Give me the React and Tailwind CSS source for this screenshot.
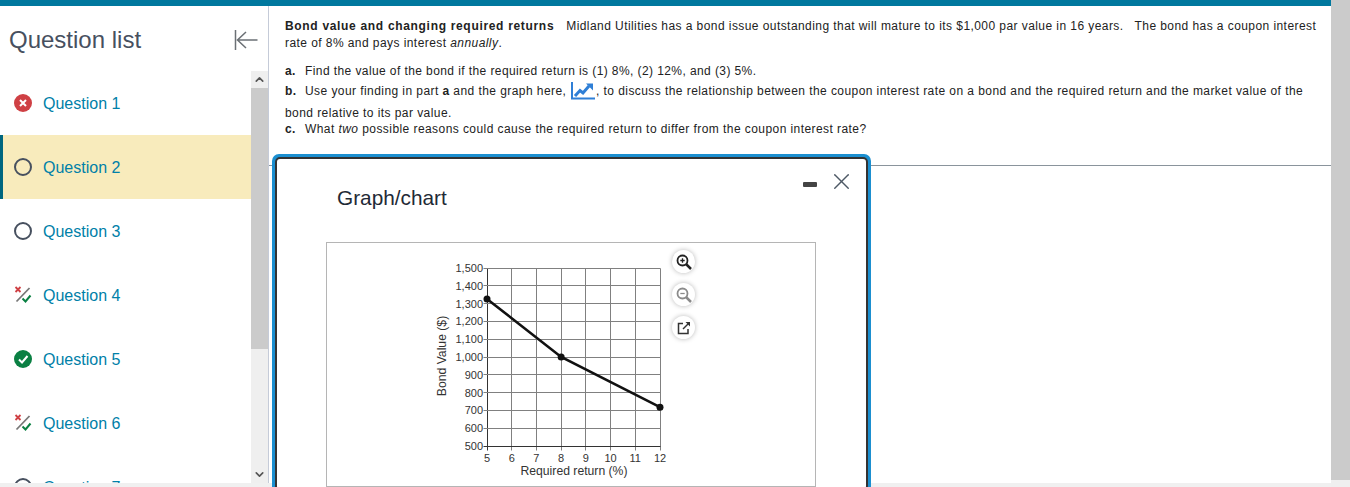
import React from "react";
import { X, ChevronUp, ChevronDown } from "lucide-react";

const questions = [
  { name: "Question 1", status: "wrong" },
  { name: "Question 2", status: "open", active: true },
  { name: "Question 3", status: "open" },
  { name: "Question 4", status: "partial" },
  { name: "Question 5", status: "right" },
  { name: "Question 6", status: "partial" },
  { name: "Question 7", status: "open" },
];

function StatusIcon({ status }) {
  if (status === "wrong") {
    return (
      <svg width="18" height="18" viewBox="0 0 18 18">
        <circle cx="9" cy="9" r="9" fill="#cf4044" />
        <path d="M6 6l6 6M12 6l-6 6" stroke="#fff" strokeWidth="2" />
      </svg>
    );
  }
  if (status === "right") {
    return (
      <svg width="18" height="18" viewBox="0 0 18 18">
        <circle cx="9" cy="9" r="9" fill="#0a8043" />
        <path d="M5 9.500l3 3 5.500-6.500" stroke="#fff" strokeWidth="2" fill="none" />
      </svg>
    );
  }
  if (status === "partial") {
    return (
      <svg width="18" height="18" viewBox="0 0 18 18">
        <path d="M1.500 1l5 5M6.500 1l-5 5" stroke="#cf4044" strokeWidth="1.8" />
        <path d="M2.500 15.500L15.500 2" stroke="#777" strokeWidth="1.8" />
        <path d="M8.500 12.500l3 3 5-6" stroke="#0a8043" strokeWidth="2" fill="none" />
      </svg>
    );
  }
  return (
    <svg width="18" height="18" viewBox="0 0 18 18">
      <circle cx="9" cy="9" r="8" fill="none" stroke="#47505f" strokeWidth="2" />
    </svg>
  );
}

function QuestionRow({ q }) {
  return (
    <div className={`flex h-16 shrink-0 items-center ${q.active ? "border-l-[3px] border-[#00667f] bg-[#f8ebbc] pl-[11px]" : "pl-[14px]"}`}>
      <StatusIcon status={q.status} />
      <span className="ml-[11px] pt-[2px] text-[16px] text-[#0080a8]">{q.name}</span>
    </div>
  );
}

function GraphIcon() {
  return (
    <svg width="24" height="18" viewBox="0 0 24 18" className="mx-[1px] inline-block align-[-5px]">
      <path d="M1 0v16.500h23" stroke="#2f7fd6" strokeWidth="2" fill="none" />
      <path d="M4 14l5-5.500 3 2.500 6-7" stroke="#2f7fd6" strokeWidth="3" fill="none" />
      <path d="M15 1.500h7v7z" fill="#2f7fd6" />
    </svg>
  );
}

function Chart() {
  const xs = [5, 6, 7, 8, 9, 10, 11, 12];
  const ys = [1500, 1400, 1300, 1200, 1100, 1000, 900, 800, 700, 600, 500];
  const xAt = (v) => 160 + ((v - 5) * 173) / 7;
  const yAt = (v) => 25 + ((1500 - v) * 178) / 1000;
  const crisp = (n) => Math.floor(n) + 0.5;
  return (
    <svg width="488" height="243" viewBox="0 0 488 243" className="block font-['Liberation_Sans',Arial,sans-serif]">
      {xs.map((v) => (
        <line key={v} x1={crisp(xAt(v))} x2={crisp(xAt(v))} y1={crisp(yAt(1500))} y2={crisp(yAt(500)) + 4} stroke={v === 5 ? "#333" : "#808080"} />
      ))}
      {ys.map((v) => (
        <line key={v} x1={crisp(xAt(5)) - 4} x2={crisp(xAt(12))} y1={crisp(yAt(v))} y2={crisp(yAt(v))} stroke={v === 500 ? "#333" : "#808080"} />
      ))}
      {xs.map((v) => (
        <text key={v} x={xAt(v)} y="219" textAnchor="middle" fontSize="11" fill="#333">{v}</text>
      ))}
      {ys.map((v) => (
        <text key={v} x={xAt(5) - 4} y={yAt(v) + 4} textAnchor="end" fontSize="11" fill="#333">
          {v >= 1000 ? `1,${String(v - 1000).padStart(3, "0")}` : v}
        </text>
      ))}
      <text x="247" y="232" textAnchor="middle" fontSize="12.2" fill="#333">Required return (%)</text>
      <text transform="translate(119 113) rotate(-90)" textAnchor="middle" fontSize="12.2" fill="#333">Bond Value ($)</text>
      <polyline points={`${xAt(5)},${yAt(1326)} ${xAt(8)},${yAt(1000)} ${xAt(12)},${yAt(718)}`} fill="none" stroke="#111" strokeWidth="2.6" />
      <circle cx={xAt(5)} cy={yAt(1326)} r="3.5" fill="#111" />
      <circle cx={xAt(8)} cy={yAt(1000)} r="3.5" fill="#111" />
      <circle cx={xAt(12)} cy={yAt(718)} r="3.5" fill="#111" />
    </svg>
  );
}

function ToolButton({ children }) {
  return (
    <div className="flex h-[23px] w-[23px] items-center justify-center rounded-full bg-white shadow-[0_0_5px_rgba(0,0,0,0.28)]">
      <svg width="16" height="16" viewBox="0 0 16 16" fill="none">{children}</svg>
    </div>
  );
}

function Modal() {
  return (
    <div className="absolute left-[272px] top-[154px] h-[340px] w-[599px] rounded-[7px] border-[3px] border-[#1b8fd0] bg-[#1b8fd0]">
      <div className="h-full rounded-[5px] border-2 border-[#333] bg-white pl-[49px] pt-[26px]">
        <div className="ml-[11px] text-[20.8px] leading-[26px] text-[#1f2a36]">Graph/chart</div>
        <div className="absolute right-[13px] top-[11px] flex items-center gap-[11px]">
          <div className="mt-[6px] h-[5px] w-[14px] rounded-[1px] bg-[#444]" />
          <X size={27} strokeWidth={1.3} className="text-[#4d5865]" />
        </div>
        <div className="relative mt-[31px] h-[245px] w-[490px] border border-[#b5b5b5]">
          <Chart />
          <div className="absolute left-[345px] top-[7px] flex flex-col gap-[10px]">
            <ToolButton>
              <circle cx="6.500" cy="6.500" r="5" stroke="#222" strokeWidth="1.8" />
              <path d="M10 10l5 5" stroke="#222" strokeWidth="2.500" />
              <path d="M4.300 6.500h4.400M6.500 4.300v4.400" stroke="#222" strokeWidth="1.3" />
            </ToolButton>
            <ToolButton>
              <circle cx="6.500" cy="6.500" r="5" stroke="#8a8a8a" strokeWidth="1.8" />
              <path d="M10 10l5 5" stroke="#8a8a8a" strokeWidth="2.500" />
              <path d="M4.300 6.500h4.400" stroke="#8a8a8a" strokeWidth="1.3" />
            </ToolButton>
            <ToolButton>
              <path d="M7 3.500H2.500v10h9.500V9" stroke="#333" strokeWidth="1.5" />
              <path d="M7 9l6-6" stroke="#333" strokeWidth="1.5" />
              <path d="M9.500 2h4.500v4.500z" fill="#333" />
            </ToolButton>
          </div>
        </div>
      </div>
    </div>
  );
}

function App() {
  return (
    <div className="relative flex h-[487px] w-[1350px] overflow-hidden bg-white font-['Liberation_Sans',Arial,sans-serif] text-[#222]">
      <div className="flex w-[1331px] shrink-0 flex-col">
        <div className="h-[6px] shrink-0 bg-[#00789e]" />
        <div className="flex h-[477px]">
          {/* Sidebar */}
          <div className="flex w-[269px] shrink-0 flex-col border-r border-[#c5cbd8]">
            <div className="flex h-[65px] shrink-0 items-center justify-between pl-[9px] pr-[10px] pt-[2px]">
              <h1 className="text-[24px] font-normal text-[#47505f]">Question list</h1>
              <svg width="24" height="22" viewBox="0 0 24 22" fill="none" stroke="#6b7075" strokeWidth="1.500">
                <path d="M1.500 1v20M3.500 11h20M12 3l-8.500 8 8.500 8" />
              </svg>
            </div>
            <div className="flex min-h-0 flex-1">
              <div className="flex min-w-0 flex-1 flex-col overflow-hidden">
                {questions.map((q) => (
                  <QuestionRow key={q.name} q={q} />
                ))}
              </div>
              <div className="flex w-[17px] shrink-0 flex-col bg-[#efefef]">
                <div className="flex h-[17px] items-center justify-center"><ChevronUp size={13} strokeWidth={3} className="text-[#555]" /></div>
                <div className="h-[261px] bg-[#cbcbcb]" />
                <div className="mt-auto flex h-[17px] items-center justify-center"><ChevronDown size={13} strokeWidth={3} className="text-[#555]" /></div>
              </div>
            </div>
          </div>
          {/* Question text */}
          <div className="min-w-0 flex-1 pt-[12px] text-[12px] tracking-[0.43px] text-[#222]">
            <div className="pl-[16px] pr-[12px]">
              <p className="leading-[17px]">
                <b className="tracking-[0.68px]">Bond value and changing required returns</b>
                <span className="ml-3">Midland Utilities has a bond issue outstanding that will mature to its $1,000 par value in 16 years.</span>
                <span className="ml-[11px]">The bond has a coupon interest rate of 8% and pays interest <i>annually</i>.</span>
              </p>
              <p className="mt-[10px] leading-[19px] tracking-[0.41px]"><b className="inline-block w-[20px]">a.</b>Find the value of the bond if the required return is (1) 8%, (2) 12%, and (3) 5%.</p>
              <p className="-mt-[1px] leading-[22px]"><b className="inline-block w-[20px]">b.</b>Use your finding in part <b>a</b> and the graph here, <GraphIcon />, to discuss the relationship between the coupon interest rate on a bond and the required return and the market value of the bond relative to its par value.</p>
              <p className="-mt-[3px] leading-[16px]"><b className="inline-block w-[20px]">c.</b>What <i>two</i> possible reasons could cause the required return to differ from the coupon interest rate?</p>
            </div>
            <div className="mt-[28px] h-px bg-[#8a949c]" />
          </div>
        </div>
        <div className="h-[4px] shrink-0 bg-[#f0f0f0]" />
      </div>
      {/* Page scrollbar */}
      <div className="flex w-[19px] shrink-0 flex-col bg-[#cbcbcb]">
        <div className="mt-auto h-[7px] bg-[#efefef]" />
      </div>
      <Modal />
    </div>
  );
}

export default App;
